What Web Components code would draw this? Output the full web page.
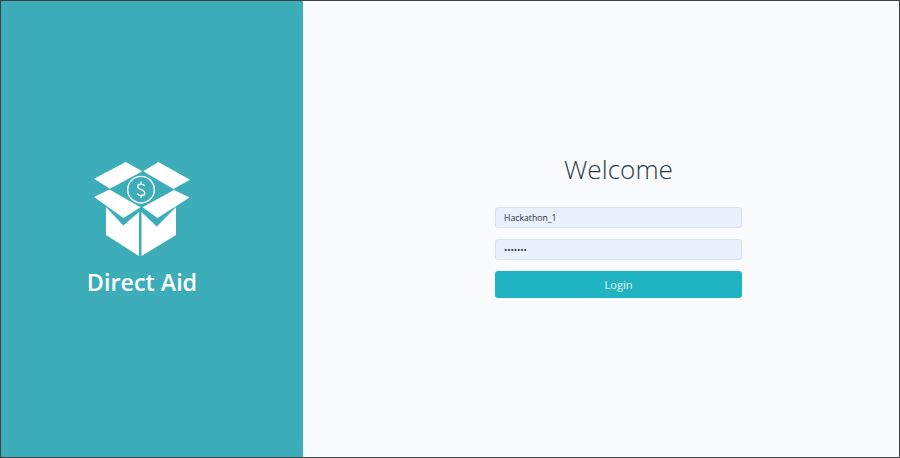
<!DOCTYPE html>
<html>
<head>
<meta charset="utf-8">
<style>
  html, body { margin: 0; height: 100%; }
  body { font-family: "Open Sans", "Noto Sans", sans-serif; }
</style>
</head>
<body>
<login-page>
  <brand-panel slot="brand">Direct Aid</brand-panel>
  <login-form slot="form"></login-form>
</login-page>
<script>
class LoginPage extends HTMLElement {
  constructor() {
    super();
    this.attachShadow({ mode: 'open' }).innerHTML = `
      <style>
        :host {
          display: flex;
          box-sizing: border-box;
          width: 900px;
          height: 458px;
          border: 1px solid #3b4147;
          background: #f9fbfd;
        }
        ::slotted(brand-panel) { width: 302px; flex: none; }
        ::slotted(login-form) { flex: 1; }
      </style>
      <slot name="brand"></slot>
      <slot name="form"></slot>
    `;
  }
}

class BrandPanel extends HTMLElement {
  constructor() {
    super();
    this.attachShadow({ mode: 'open' }).innerHTML = `
      <style>
        :host {
          display: flex;
          flex-direction: column;
          align-items: center;
          background: #3dadb9;
          color: #fff;
          padding-top: 159px;
          box-sizing: border-box;
        }
        svg { display: block; width: 100px; height: 100px; margin-left: -22px; }
        .name {
          font-size: 23.3px;
          font-weight: 600;
          line-height: 32px;
          margin-top: 6px;
          margin-left: -20px;
        }
      </style>
      <svg viewBox="91 160 100 100" fill="#fff">
        <path d="M94 178.7 125.7 162 142.3 171.3 110 188.7Z"/>
        <path d="M143.3 171.3 158.3 162 190 179.7 173.3 189Z"/>
        <path d="M94 197 109.5 189.5 140.5 207.2 123.5 218Z"/>
        <path d="M142.5 207.2 174 190 189.5 197.5 157.5 218Z"/>
        <path d="M106 207 123.3 225.5 139 212V256L106 235Z"/>
        <path d="M141.5 212 156.7 226.5 176 207V235L141.5 256Z"/>
        <circle cx="141" cy="189.7" r="13.3" fill="none" stroke="#fff" stroke-width="1.4"/>
        <path d="M144.6 186C143.8 183.4 137.6 183.2 137.6 186.6 137.6 190 144.8 189.2 144.8 192.9 144.8 196.4 138.2 196.2 137.3 193.4M141 181.5V184M141 195.6V198.3" fill="none" stroke="#fff" stroke-width="1.3"/>
      </svg>
      <div class="name"><slot></slot></div>
    `;
  }
}

class TextField extends HTMLElement {
  constructor() {
    super();
    this.attachShadow({ mode: 'open' }).innerHTML = `
      <style>
        :host { display: block; }
        input {
          display: block;
          box-sizing: border-box;
          width: 100%;
          height: 21px;
          padding: 0 8px;
          border: 1px solid #dbe2e8;
          border-radius: 3px;
          background: #e8f1fd;
          color: #2b3238;
          font: 8.7px "Open Sans", "Noto Sans", sans-serif;
          outline: none;
        }
      </style>
      <input>
    `;
    const input = this.shadowRoot.querySelector('input');
    input.type = this.getAttribute('type') || 'text';
    input.value = this.getAttribute('value') || '';
    input.setAttribute('value', input.value);
  }
}

class LoginForm extends HTMLElement {
  constructor() {
    super();
    this.attachShadow({ mode: 'open' }).innerHTML = `
      <style>
        :host {
          display: flex;
          flex-direction: column;
          align-items: center;
          padding: 149px 0 0 35px;
          box-sizing: border-box;
        }
        h1 {
          margin: 0 0 19px;
          font-size: 26.2px;
          font-weight: 300;
          line-height: 38px;
          color: #2c3b47;
        }
        .fields {
          width: 247px;
          display: flex;
          flex-direction: column;
          gap: 11px;
        }
        button {
          height: 26.5px;
          border: 0;
          border-radius: 3px;
          background: #20b4c2;
          color: #eef6f7;
          font: 11px "Open Sans", "Noto Sans", sans-serif;
        }
      </style>
      <h1>Welcome</h1>
      <div class="fields">
        <text-field value="Hackathon_1"></text-field>
        <text-field type="password" value="1234567"></text-field>
        <button>Login</button>
      </div>
    `;
  }
}

customElements.define('text-field', TextField);
customElements.define('brand-panel', BrandPanel);
customElements.define('login-form', LoginForm);
customElements.define('login-page', LoginPage);
</script>
</body>
</html>
